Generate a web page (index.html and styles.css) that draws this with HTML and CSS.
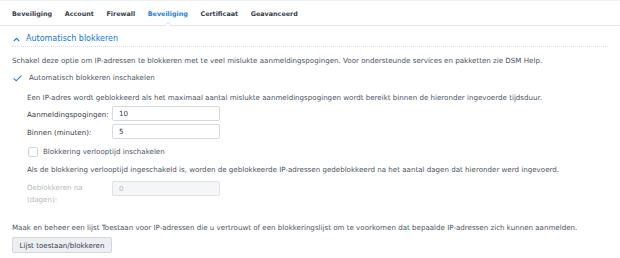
FILE: index.html
```html
<!doctype html>
<html lang="nl">
	<head>
		<meta charset="UTF-8" />
		<title>Beveiliging</title>
		<link rel="stylesheet" href="styles.css">
	</head>
	<body>
		<nav class="tabs">
			<a class="tab">Beveiliging</a>
			<a class="tab">Account</a>
			<a class="tab">Firewall</a>
			<a class="tab active">Beveiliging</a>
			<a class="tab">Certificaat</a>
			<a class="tab">Geavanceerd</a>
		</nav>

		<section class="panel">
			<header class="section-head">
				<svg class="chevron" width="7" height="5" viewBox="0 0 7 5">
					<path d="M0.8 4.2 L3.5 1.4 L6.2 4.2" fill="none" stroke="currentColor" stroke-width="1.1" />
				</svg>
				<span>Automatisch blokkeren</span>
			</header>

			<p class="line mt-8">
				Schakel deze optie om IP-adressen te blokkeren met te veel mislukte aanmeldingspogingen. Voor ondersteunde services en pakketten zie DSM Help.
			</p>

			<label class="check-row mt-5">
				<span class="box checked">
					<svg width="9" height="7" viewBox="0 0 9 7">
						<path d="M0.6 3.4 L3.2 5.8 L8.4 0.6" fill="none" stroke="currentColor" stroke-width="1.1" />
					</svg>
				</span>
				<span>Automatisch blokkeren inschakelen</span>
			</label>

			<div class="indent">
				<p class="line mt-8">
					Een IP-adres wordt geblokkeerd als het maximaal aantal mislukte aanmeldingspogingen wordt bereikt binnen de hieronder ingevoerde tijdsduur.
				</p>

				<div class="field mt-2">
					<span class="field-label">Aanmeldingspogingen:</span>
					<span class="input">10</span>
				</div>

				<div class="field mt-3">
					<span class="field-label">Binnen (minuten):</span>
					<span class="input">5</span>
				</div>

				<label class="check-row mt-7 gap-5">
					<span class="box"></span>
					<span>Blokkering verlooptijd inschakelen</span>
				</label>

				<p class="line mt-6">
					Als de blokkering verlooptijd ingeschakeld is, worden de geblokkeerde IP-adressen gedeblokkeerd na het aantal dagen dat hieronder werd ingevoerd.
				</p>

				<div class="field field-top mt-5">
					<span class="field-label disabled">Deblokkeren na<br />(dagen):</span>
					<span class="input disabled">0</span>
				</div>
			</div>

			<p class="line mt-16">
				Maak en beheer een lijst Toestaan voor IP-adressen die u vertrouwt of een blokkeringslijst om te voorkomen dat bepaalde IP-adressen zich kunnen aanmelden.
			</p>

			<button class="button mt-3">Lijst toestaan/blokkeren</button>
		</section>
	</body>
</html>
```

FILE: styles.css
```css
:root {
	--color-text: #4a545f;
	--color-dark: #37404a;
	--color-blue: #1a7fe0;
	--color-head: #1279d4;
	--color-border: #e4e7eb;
	--color-input-border: #d5dae0;
	--color-disabled: #b4bbc3;
}

body {
	margin: 0;
	background: #ffffff;
	color: var(--color-text);

	font-family: 'DejaVu Sans', Verdana, sans-serif;
	font-size: 7.1px;
	line-height: 12px;
}

p {
	margin: 0;
}

/* Tabs */

.tabs {
	position: relative;
	display: flex;
	align-items: center;
	height: 21px;
	padding: 3px 12px 0;

	border-top: 1px solid #eef0f4;
	border-bottom: 1px solid var(--color-border);
}

.tab {
	margin-right: 12.6px;
	color: var(--color-dark);
	font-size: 6.4px;
	font-weight: 700;
	line-height: 21px;
}

.tab.active {
	position: relative;
	color: var(--color-blue);
}

.tab.active::after {
	content: '';
	position: absolute;
	left: 50%;
	bottom: -1px;
	width: 5px;
	height: 5px;
	margin-left: -3px;

	background: #ffffff;
	border-left: 1px solid var(--color-border);
	border-top: 1px solid var(--color-border);
	transform: translateY(3px) rotate(45deg);
}

/* Panel */

.panel {
	padding: 0 12px;
}

.section-head {
	display: flex;
	align-items: center;
	gap: 6px;
	height: 14px;
	padding-top: 6px;

	color: var(--color-head);
	font-size: 8px;
	border-bottom: 1px dotted #d9dde3;
}

.chevron {
	margin-left: 1px;
}

.line {
	white-space: nowrap;
}

.indent {
	padding-left: 15px;
}

.check-row {
	display: flex;
	align-items: center;
	gap: 6px;
	height: 12px;
}

.gap-5 {
	gap: 5px;
	margin-left: 1px;
}

.box {
	display: flex;
	align-items: center;
	justify-content: center;
	width: 8px;
	height: 8px;

	border: 1px solid #cfd4da;
	border-radius: 2px;
}

.box.checked {
	width: 9px;
	border-color: transparent;
	color: var(--color-blue);
}

.field {
	display: flex;
	align-items: center;
}

.field-top {
	align-items: flex-start;
}

.field-label {
	width: 85px;
	padding-top: 2px;
	color: var(--color-dark);
}

.field-top .field-label {
	padding-top: 1px;
}

.field-label.disabled {
	color: var(--color-disabled);
}

.input {
	box-sizing: border-box;
	width: 108px;
	height: 15px;
	padding: 1px 0 0 6px;

	border: 1px solid var(--color-input-border);
	border-radius: 2px;

	color: var(--color-dark);
	line-height: 12px;
}

.input.disabled {
	background: #f4f6f8;
	border-color: #dfe3e8;
	color: var(--color-disabled);
}

.button {
	display: block;
	box-sizing: border-box;
	width: 100px;
	height: 16px;
	padding: 1px 0 0;

	background: #eceef2;
	border: 1px solid #d3d8de;
	border-radius: 2px;

	color: var(--color-dark);
	font-family: 'DejaVu Sans', Verdana, sans-serif;
	font-size: 7.1px;
	line-height: 13px;
}

/* Utils */

.mt-2 {
	margin-top: 2px;
}

.mt-3 {
	margin-top: 3px;
}

.mt-5 {
	margin-top: 5px;
}

.mt-6 {
	margin-top: 6px;
}

.mt-7 {
	margin-top: 7px;
}

.mt-8 {
	margin-top: 8px;
}

.mt-16 {
	margin-top: 16px;
}
```
